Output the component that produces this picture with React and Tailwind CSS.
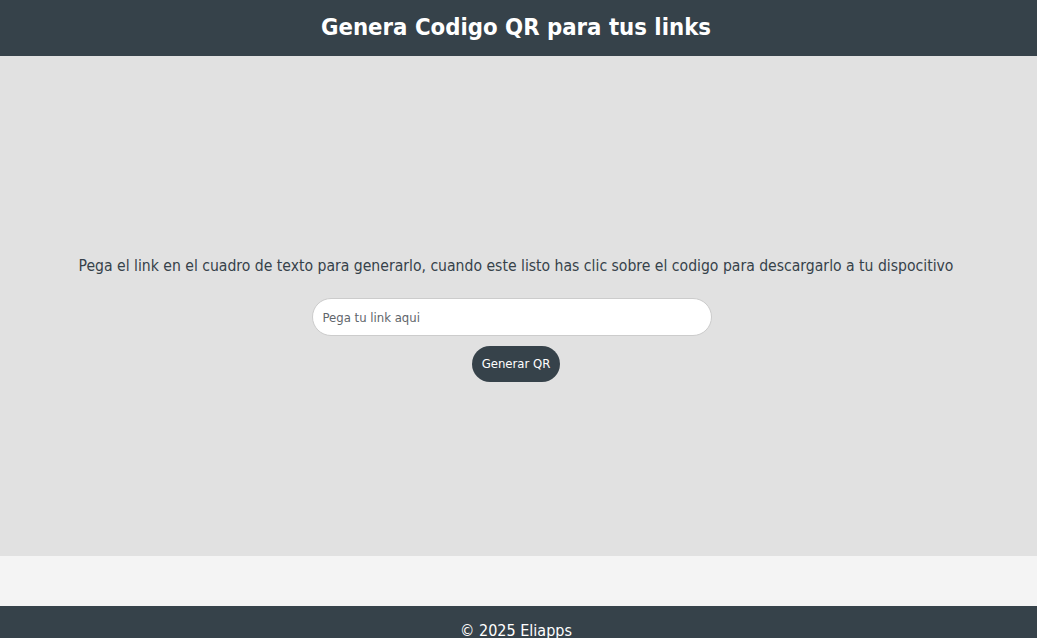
import React, { useState } from 'react';

const App = () => {
  const [link, setLink] = useState('');

  return (
    <div className="min-h-screen flex flex-col bg-[#f4f4f4] font-['DejaVu_Sans_Condensed','DejaVu_Sans',sans-serif]">
      {/* Header */}
      <header className="h-14 pr-[5px] bg-[#36424a] flex items-center justify-center">
        <h1 className="text-white text-[23.7px] font-bold">Genera Codigo QR para tus links</h1>
      </header>

      {/* Main */}
      <main className="h-[500px] pr-[5px] bg-[#e1e1e1] flex flex-col items-center justify-center pt-[24px] text-[#36424a]">
        <p className="text-[15.6px] leading-6">
          Pega el link en el cuadro de texto para generarlo, cuando este listo has clic sobre el codigo para descargarlo a tu dispocitivo
        </p>
        <input
          value={link}
          onChange={(e) => setLink(e.target.value)}
          placeholder="Pega tu link aqui"
          className="mt-5 mr-[9px] w-[400px] h-[38px] px-[10px] bg-white border border-[#cccccc] rounded-full text-[13px] text-[#333] placeholder:text-[#5f666b] outline-none"
        />
        <button className="mt-[10px] h-9 px-[10px] bg-[#36424a] text-white text-[13px] rounded-full">
          Generar QR
        </button>
      </main>

      <div className="h-[50px] bg-[#f4f4f4]" />

      {/* Footer */}
      <footer className="bg-[#36424a] pr-[5px] text-white text-center text-[16px] py-[13px]">
        © 2025 Eliapps
      </footer>
    </div>
  );
};

export default App;
